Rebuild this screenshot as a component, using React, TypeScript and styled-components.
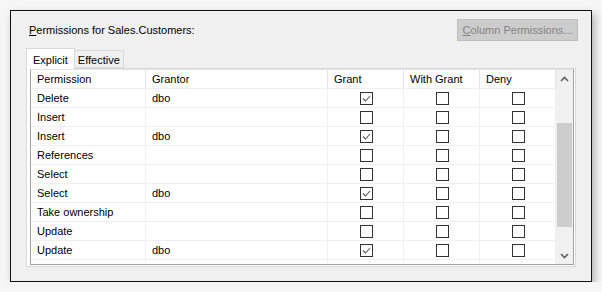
import styled, { createGlobalStyle } from "styled-components";

const GlobalStyle = createGlobalStyle`
  html, body {
    margin: 0;
    padding: 0;
    background: #f6f6f6;
  }
  body {
    font-family: "Liberation Sans", Arial, sans-serif;
    font-size: 11px;
    color: #000;
  }
`;

const Page = styled.div`
  padding: 10px 0 0 10px;
`;

const Window = styled.div`
  box-sizing: border-box;
  width: 582px;
  height: 272px;
  border: 1px solid #111;
  background: #f0f0f0;
  box-shadow: 3px 4px 8px rgba(0, 0, 0, 0.28);
  display: flex;
  flex-direction: column;
`;

const TopRow = styled.div`
  display: flex;
  align-items: center;
  justify-content: space-between;
  margin-top: 8px;
  height: 22px;
  padding: 0 13px 0 18px;
`;

const Label = styled.span`
  font-size: 11px;
`;

const DisabledButton = styled.div`
  box-sizing: border-box;
  width: 121px;
  height: 22px;
  border: 1px solid #bfbfbf;
  background: #cccccc;
  color: #838383;
  display: flex;
  align-items: center;
  justify-content: center;
  font-size: 11px;
`;

const TabStrip = styled.div`
  display: flex;
  align-items: flex-end;
  margin: 7px 0 0 15px;
  height: 21px;
  position: relative;
  z-index: 1;
`;

const Tab = styled.div<{ $active?: boolean }>`
  box-sizing: border-box;
  height: ${(p) => (p.$active ? "21px" : "18px")};
  margin-bottom: ${(p) => (p.$active ? "0" : "1px")};
  padding: ${(p) => (p.$active ? "1px 6px 0 6px" : "2px 3px 0 3px")};
  border: 1px solid #d9d9d9;
  border-bottom: ${(p) => (p.$active ? "none" : "1px solid #d9d9d9")};
  border-left: ${(p) => (p.$active ? "1px solid #d9d9d9" : "none")};
  background: ${(p) => (p.$active ? "#fff" : "#f0f0f0")};
  display: flex;
  align-items: center;
  font-size: 11px;
`;

const Panel = styled.div`
  box-sizing: border-box;
  margin: -1px 0 0 15px;
  width: 550px;
  height: 199px;
  border: 1px solid #d9d9d9;
  background: #fff;
  padding: 0 0 0 3px;
`;

const Grid = styled.div`
  box-sizing: border-box;
  width: 544px;
  height: 196px;
  border: 1px solid #a0a0a0;
  border-top-color: #e3e3e3;
  display: flex;
  overflow: hidden;
`;

const Table = styled.div`
  display: grid;
  grid-template-columns: 115px 182px 76px 76px 76px;
  grid-auto-rows: 19px;
  align-content: start;
`;

const Cell = styled.div<{ $center?: boolean; $head?: boolean }>`
  box-sizing: border-box;
  border-right: 1px solid ${(p) => (p.$head ? "#e5e5e5" : "#f0f0f0")};
  border-bottom: 1px solid #f0f0f0;
  display: flex;
  align-items: center;
  justify-content: ${(p) => (p.$center ? "center" : "flex-start")};
  padding-left: ${(p) => (p.$center ? "0" : "6px")};
  font-size: 11px;
  white-space: nowrap;
`;

const Box = styled.div`
  box-sizing: border-box;
  width: 13px;
  height: 13px;
  border: 1px solid #333;
  background: #fff;
  display: flex;
  align-items: center;
  justify-content: center;
  margin-left: 1px;
`;

const ScrollBar = styled.div`
  width: 17px;
  background: #f0f0f0;
  display: flex;
  flex-direction: column;
  align-items: center;
`;

const Arrow = styled.div`
  height: 17px;
  width: 17px;
  display: flex;
  align-items: center;
  justify-content: center;
`;

const Track = styled.div`
  flex: 1;
  width: 100%;
  display: flex;
  flex-direction: column;
  align-items: center;
`;

const Thumb = styled.div`
  width: 15px;
  height: 104px;
  margin-top: 36px;
  background: #cdcdcd;
`;

const Check = ({ on }: { on: boolean }) => (
  <Box>
    {on && (
      <svg width="11" height="11" viewBox="0 0 11 11">
        <path d="M2 5.5 L4.5 8 L9 3" fill="none" stroke="#555" strokeWidth="1.1" />
      </svg>
    )}
  </Box>
);

const Chevron = ({ up }: { up?: boolean }) => (
  <svg width="9" height="6" viewBox="0 0 9 6">
    <path
      d={up ? "M1 5 L4.5 1.5 L8 5" : "M1 1 L4.5 4.5 L8 1"}
      fill="none"
      stroke="#606060"
      strokeWidth="1.6"
    />
  </svg>
);

const rows: [string, string, boolean][] = [
  ["Delete", "dbo", true],
  ["Insert", "", false],
  ["Insert", "dbo", true],
  ["References", "", false],
  ["Select", "", false],
  ["Select", "dbo", true],
  ["Take ownership", "", false],
  ["Update", "", false],
  ["Update", "dbo", true],
  ["", "", false],
];

const headers = ["Permission", "Grantor", "Grant", "With Grant", "Deny"];

export default function App() {
  return (
    <>
      <GlobalStyle />
      <Page>
        <Window>
          <TopRow>
            <Label>
              <u>P</u>ermissions for Sales.Customers:
            </Label>
            <DisabledButton>
              <span>
                <u>C</u>olumn Permissions...
              </span>
            </DisabledButton>
          </TopRow>
          <TabStrip>
            <Tab $active>Explicit</Tab>
            <Tab>Effective</Tab>
          </TabStrip>
          <Panel>
            <Grid>
              <Table>
                {headers.map((h) => (
                  <Cell key={h} $head>
                    {h}
                  </Cell>
                ))}
                {rows.map(([perm, grantor, granted], i) => [
                  <Cell key={`p${i}`}>{perm}</Cell>,
                  <Cell key={`g${i}`}>{grantor}</Cell>,
                  <Cell key={`a${i}`} $center>
                    {perm && <Check on={granted} />}
                  </Cell>,
                  <Cell key={`w${i}`} $center>
                    {perm && <Check on={false} />}
                  </Cell>,
                  <Cell key={`d${i}`} $center>
                    {perm && <Check on={false} />}
                  </Cell>,
                ])}
              </Table>
              <ScrollBar>
                <Arrow>
                  <Chevron up />
                </Arrow>
                <Track>
                  <Thumb />
                </Track>
                <Arrow>
                  <Chevron />
                </Arrow>
              </ScrollBar>
            </Grid>
          </Panel>
        </Window>
      </Page>
    </>
  );
}
